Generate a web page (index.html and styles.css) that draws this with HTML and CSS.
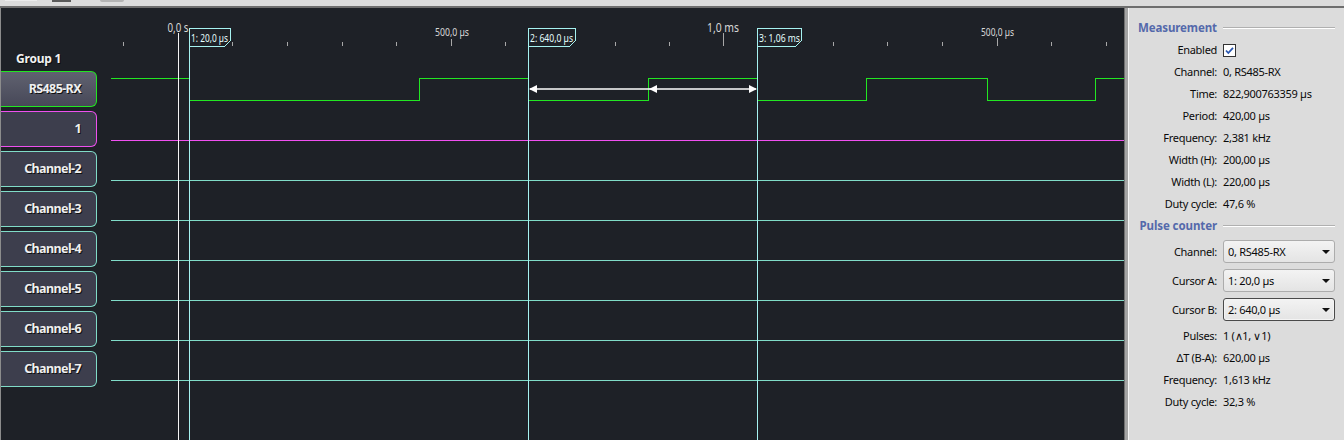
FILE: index.html
```html
<!DOCTYPE html>
<html>
<head>
<meta charset="utf-8">
<link rel="stylesheet" href="styles.css">
</head>
<body>
<div class="top">
  <span class="tb tb1"></span><span class="tb tb2"></span><span class="tb tb3"></span>
</div>
<div class="main">
  <div class="scope">
    <div class="channels">
      <div class="group">Group 1</div>
      <div class="btns">
        <div class="ch sel c-green">RS485-RX</div>
        <div class="ch c-mag">1</div>
        <div class="ch c-teal">Channel-2</div>
        <div class="ch c-teal">Channel-3</div>
        <div class="ch c-teal">Channel-4</div>
        <div class="ch c-teal">Channel-5</div>
        <div class="ch c-teal">Channel-6</div>
        <div class="ch c-teal">Channel-7</div>
      </div>
    </div>
    <svg class="wave" width="1024" height="432" viewBox="100 8 1024 432" shape-rendering="crispEdges">
      <g class="ticks">
        <path d="M123.5 42V46M232.5 42V46M287.5 42V46M342.5 42V46M396.5 42V46M505.5 42V46M560.5 42V46M615.5 42V46M669.5 42V46M778.5 42V46M833.5 42V46M887.5 42V46M942.5 42V46M1051.5 42V46M1106.5 42V46M451.5 39V46M997.5 38V46M723.5 33V46"/>
      </g>
      <g class="axis-text" shape-rendering="auto">
        <text x="167.5" y="31.5" class="big" textLength="21" lengthAdjust="spacingAndGlyphs">0,0 s</text>
        <text x="707" y="31.5" class="big" textLength="32" lengthAdjust="spacingAndGlyphs">1,0 ms</text>
        <text x="435" y="35.5" class="small" textLength="34" lengthAdjust="spacingAndGlyphs">500,0 µs</text>
        <text x="981" y="35.5" class="small" textLength="33" lengthAdjust="spacingAndGlyphs">500,0 µs</text>
      </g>
      <path class="sig green" d="M111 78.5H189.5V100.5H419.5V78.5H528.5V100.5H648.5V78.5H757.5V100.5H866.5V78.5H987.5V100.5H1095.5V78.5H1124"/>
      <path class="sig mag" d="M111 140.5H1124"/>
      <path class="sig teal" d="M111 180.5H1124M111 220.5H1124M111 260.5H1124M111 300.5H1124M111 340.5H1124M111 380.5H1124"/>
      <path class="zero" d="M178.5 33V440"/>
      <path class="cur" d="M189.5 28V440M528.5 28V440M757.5 28V440"/>
      <path class="lbl" d="M189.5 28.5H230.5V40.5L224.5 46.5H189.5Z"/>
      <path class="lbl" d="M528.5 28.5H575.5V40.5L569.5 46.5H528.5Z"/>
      <path class="lbl" d="M757.5 28.5H801.5V40.5L795.5 46.5H757.5Z"/>
      <g class="cur-text" shape-rendering="auto">
        <text x="191" y="41.5" textLength="37" lengthAdjust="spacingAndGlyphs">1: 20,0 µs</text>
        <text x="530" y="41.5" textLength="43" lengthAdjust="spacingAndGlyphs">2: 640,0 µs</text>
        <text x="759" y="41.5" textLength="41" lengthAdjust="spacingAndGlyphs">3: 1,06 ms</text>
      </g>
      <g class="arrow" shape-rendering="auto">
        <path d="M530 89H756"/>
        <polygon points="529,89 537,85 537,93"/>
        <polygon points="649,89 657,85 657,93"/>
        <polygon points="757,89 749,85 749,93"/>
      </g>
    </svg>
  </div>
  <div class="splitter"></div>
  <div class="panel">
    <div class="row head"><span class="lab">Measurement</span><span class="rule"></span></div>
    <div class="row"><span class="lab">Enabled</span><span class="val"><svg class="chk" width="13" height="13" viewBox="0 0 13 13"><rect x="0.5" y="0.5" width="12" height="12" fill="#fff" stroke="#333"/><path d="M3 6.5L5.3 9 10 3.8" fill="none" stroke="#2a57b0" stroke-width="1.8"/></svg></span></div>
    <div class="row"><span class="lab">Channel:</span><span class="val">0, RS485-RX</span></div>
    <div class="row"><span class="lab">Time:</span><span class="val">822,900763359 µs</span></div>
    <div class="row"><span class="lab">Period:</span><span class="val">420,00 µs</span></div>
    <div class="row"><span class="lab">Frequency:</span><span class="val">2,381 kHz</span></div>
    <div class="row"><span class="lab">Width (H):</span><span class="val">200,00 µs</span></div>
    <div class="row"><span class="lab">Width (L):</span><span class="val">220,00 µs</span></div>
    <div class="row"><span class="lab">Duty cycle:</span><span class="val">47,6 %</span></div>
    <div class="row head"><span class="lab">Pulse counter</span><span class="rule"></span></div>
    <div class="row srow"><span class="lab">Channel:</span><div class="select">0, RS485-RX<span class="caret"></span></div></div>
    <div class="row srow"><span class="lab">Cursor A:</span><div class="select">1: 20,0 µs<span class="caret"></span></div></div>
    <div class="row srow last"><span class="lab">Cursor B:</span><div class="select focus">2: 640,0 µs<span class="caret"></span></div></div>
    <div class="row"><span class="lab">Pulses:</span><span class="val">1 (∧1, ∨1)</span></div>
    <div class="row"><span class="lab">ΔT (B-A):</span><span class="val">620,00 µs</span></div>
    <div class="row"><span class="lab">Frequency:</span><span class="val">1,613 kHz</span></div>
    <div class="row"><span class="lab">Duty cycle:</span><span class="val">32,3 %</span></div>
  </div>
</div>
</body>
</html>
```
FILE: styles.css
```css
html, body {
  margin: 0;
  padding: 0;
  width: 1344px;
  height: 440px;
  overflow: hidden;
  background: #dcdcdc;
  font-family: "Noto Sans", "Open Sans", sans-serif;
}
.top {
  height: 6px;
  border-bottom: 2px solid #6e6e6e;
  background: #dcdcdc;
  display: flex;
  align-items: flex-start;
}
.tb { display: block; }
.tb1 { margin-left: 5px; width: 32px; height: 1px; background: #ececec; }
.tb2 { margin-left: 15px; width: 19px; height: 2px; background: #5a5a5a; }
.tb3 { margin-left: 29px; width: 24px; height: 2px; border-radius: 0 0 12px 12px; background: #b4b4b4; }
.main {
  display: flex;
  height: 432px;
}
.scope {
  width: 1123px;
  border-left: 1px solid #8c8c8c;
  background: #1e2127;
  display: flex;
}
.channels {
  width: 99px;
  padding-top: 43px;
  box-sizing: border-box;
}
.group {
  height: 16px;
  line-height: 16px;
  padding-left: 15px;
  margin-bottom: 4px;
  color: #f2f2f2;
  font-weight: bold;
  font-size: 12px;
  letter-spacing: -0.2px;
  text-shadow: 1px 1px 0 #0c0c0c;
}
.btns {
  display: flex;
  flex-direction: column;
  gap: 4px;
}
.ch {
  width: 96px;
  height: 36px;
  box-sizing: border-box;
  border: 1px solid #80dcc8;
  border-left: none;
  border-radius: 0 6px 6px 0;
  background: #3d3e4d;
  color: #f0f0f0;
  font-weight: bold;
  font-size: 12.5px;
  letter-spacing: -0.6px;
  text-align: right;
  padding-right: 15px;
  line-height: 34px;
  text-shadow: 1px 1px 0 #101010;
}
.ch.sel { background: linear-gradient(#606270, #474858); }
.c-green { border-color: #22e622; }
.c-mag { border-color: #ee50ee; }
.c-teal { border-color: #80dcc8; }
.wave { display: block; }
.ticks path { stroke: #a8a8a8; stroke-width: 1; fill: none; }
.axis-text text { fill: #d8d8d8; font-family: "Noto Sans", sans-serif; }
.axis-text .big { font-size: 13px; }
.axis-text .small { font-size: 10.5px; }
.sig { fill: none; stroke-width: 1; }
.green { stroke: #22e622; }
.mag { stroke: #f050f0; }
.teal { stroke: #80dcc8; }
.zero { stroke: #f4f4f4; stroke-width: 1; fill: none; }
.cur { stroke: #a6f2f0; stroke-width: 1; fill: none; }
.lbl { fill: #1e2127; stroke: #a6f2f0; stroke-width: 1; }
.cur-text text { fill: #e6fffe; font-size: 11px; font-family: "Noto Sans", sans-serif; }
.arrow path { stroke: #ffffff; stroke-width: 1.5; fill: none; }
.arrow polygon { fill: #ffffff; }
.splitter {
  width: 3px;
  background: #a4a4a4;
  border-left: 1px solid #707070;
}
.panel {
  width: 215px;
  border-left: 1px solid #f6f6f6;
  background: #dcdcdc;
  padding: 9px 8px 0 0;
  box-sizing: border-box;
  font-size: 11px;
  letter-spacing: -0.3px;
  color: #0a0a0a;
}
.row {
  display: grid;
  grid-template-columns: 88px 1fr;
  column-gap: 6px;
  height: 22px;
  line-height: 22px;
  align-items: center;
}
.lab { text-align: right; white-space: nowrap; }
.val { white-space: nowrap; }
.head .lab { font-weight: bold; color: #5469ab; font-size: 11.5px; letter-spacing: -0.1px; }
.rule {
  display: block;
  height: 0;
  border-top: 1px solid #b0b0b0;
  border-bottom: 1px solid #ffffff;
}
.chk { display: block; margin-top: 1px; }
.srow { height: 29px; }
.srow.last { margin-bottom: 1px; }
.select {
  position: relative;
  height: 23px;
  box-sizing: border-box;
  border: 1px solid #acacac;
  border-radius: 3px;
  background: linear-gradient(#f3f3f3, #e4e4e4);
  padding-left: 4px;
  line-height: 21px;
  white-space: nowrap;
}
.select.focus {
  border-color: #4a4a4a;
  box-shadow: inset 0 0 0 1px #f4f4f4;
}
.caret {
  position: absolute;
  right: 4px;
  top: 9px;
  width: 0;
  height: 0;
  border-left: 4px solid transparent;
  border-right: 4px solid transparent;
  border-top: 4px solid #111;
}
```
